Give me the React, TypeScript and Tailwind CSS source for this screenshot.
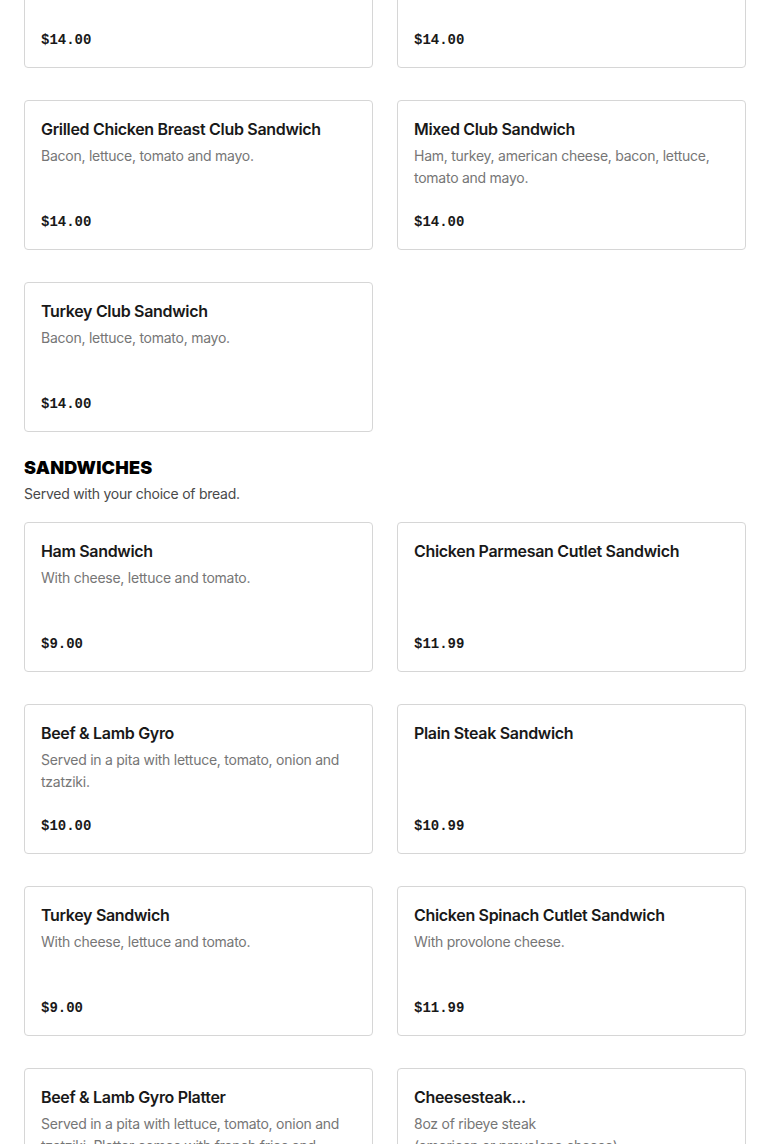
import React from "react";

type Item = { name: string; desc?: string; price: string };

const topItems: Item[] = [
  { name: "BLT Club Sandwich", desc: "Bacon, lettuce, tomato and mayo.", price: "$14.00" },
  { name: "Ham Club Sandwich", desc: "Ham, bacon, lettuce, tomato and mayo.", price: "$14.00" },
  { name: "Grilled Chicken Breast Club Sandwich", desc: "Bacon, lettuce, tomato and mayo.", price: "$14.00" },
  { name: "Mixed Club Sandwich", desc: "Ham, turkey, american cheese, bacon, lettuce, tomato and mayo.", price: "$14.00" },
  { name: "Turkey Club Sandwich", desc: "Bacon, lettuce, tomato, mayo.", price: "$14.00" },
];

const sandwiches: Item[] = [
  { name: "Ham Sandwich", desc: "With cheese, lettuce and tomato.", price: "$9.00" },
  { name: "Chicken Parmesan Cutlet Sandwich", price: "$11.99" },
  { name: "Beef & Lamb Gyro", desc: "Served in a pita with lettuce, tomato, onion and tzatziki.", price: "$10.00" },
  { name: "Plain Steak Sandwich", price: "$10.99" },
  { name: "Turkey Sandwich", desc: "With cheese, lettuce and tomato.", price: "$9.00" },
  { name: "Chicken Spinach Cutlet Sandwich", desc: "With provolone cheese.", price: "$11.99" },
  {
    name: "Beef & Lamb Gyro Platter",
    desc: "Served in a pita with lettuce, tomato, onion and tzatziki. Platter comes with french fries and salad.",
    price: "$15.00",
  },
  { name: "Cheesesteak...", desc: "8oz of ribeye steak\n(american or provolone cheese)", price: "$13.99" },
];

function Card({ item }: { item: Item }) {
  return (
    <div className="flex h-[150px] flex-col rounded border border-[#d6d6d6] bg-white px-4 pt-4 pb-4">
      <div className="text-base leading-6 font-semibold tracking-[-0.02em] text-[#191919]">{item.name}</div>
      {item.desc && (
        <div className="mt-1 whitespace-pre-line text-sm leading-[22px] tracking-[-0.018em] text-[#767676]">
          {item.desc}
        </div>
      )}
      <div className="mt-auto font-['Liberation_Mono',monospace] text-sm leading-[22px] font-bold text-[#191919]">
        {item.price}
      </div>
    </div>
  );
}

export default function App() {
  return (
    <div className="h-[1144px] overflow-hidden bg-white font-['Inter',sans-serif]">
      <div className="-mt-[82px] px-6">
        <div className="grid grid-cols-2 gap-x-6 gap-y-8">
          {topItems.map((it) => (
            <Card key={it.name} item={it} />
          ))}
        </div>
        <h2 className="mt-6 text-lg leading-6 font-black tracking-[0.01em] text-black uppercase">Sandwiches</h2>
        <p className="mt-[3px] text-sm leading-[22px] tracking-[-0.018em] text-[#494949]">
          Served with your choice of bread.
        </p>
        <div className="mt-[17px] grid grid-cols-2 gap-x-6 gap-y-8">
          {sandwiches.map((it) => (
            <Card key={it.name} item={it} />
          ))}
        </div>
      </div>
    </div>
  );
}
